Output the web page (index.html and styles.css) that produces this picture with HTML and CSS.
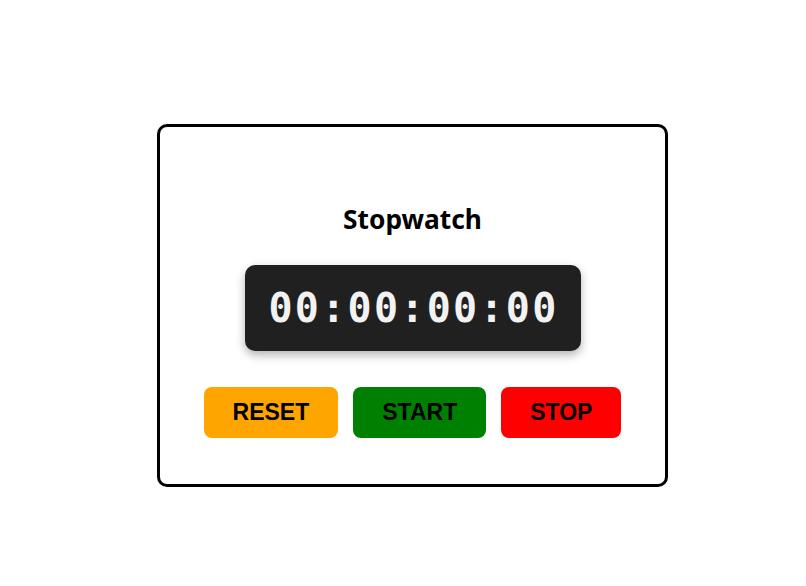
FILE: index.html
```html
<!DOCTYPE html>
<html lang="en">
<head>
<meta charset="utf-8">
<title>Stopwatch</title>
<link rel="stylesheet" href="styles.css">
</head>
<body>
  <main class="card">
    <h1 class="title">Stopwatch</h1>
    <div class="display">00:00:00:00</div>
    <div class="controls">
      <button class="btn btn-reset">RESET</button>
      <button class="btn btn-start">START</button>
      <button class="btn btn-stop">STOP</button>
    </div>
  </main>
</body>
</html>
```

FILE: styles.css
```css
html, body {
  margin: 0;
  padding: 0;
  background: #ffffff;
}

body {
  display: flex;
  justify-content: center;
  align-items: flex-start;
  padding: 124px 0 0 19px;
  font-family: "Noto Sans", "Open Sans", sans-serif;
}

.card {
  box-sizing: border-box;
  width: 511px;
  border: 3px solid #000000;
  border-radius: 10px;
  padding: 76px 0 46px;
  display: flex;
  flex-direction: column;
  align-items: center;
}

.title {
  margin: 0;
  font-size: 26.3px;
  line-height: 32px;
  font-weight: 700;
  color: #000000;
}

.display {
  margin-top: 30px;
  box-sizing: border-box;
  width: 336px;
  height: 86px;
  display: flex;
  align-items: center;
  justify-content: center;
  background: #202020;
  border-radius: 10px;
  box-shadow: 0 4px 10px rgba(0, 0, 0, 0.3);
  color: #f2f2f2;
  font-family: "DejaVu Sans Mono", monospace;
  font-weight: 700;
  font-size: 40px;
  letter-spacing: 2.3px;
  padding-left: 2px;
}

.controls {
  margin-top: 36px;
  display: flex;
  gap: 15px;
}

.btn {
  height: 51px;
  padding: 0 29px;
  border: none;
  border-radius: 8px;
  font-family: "Liberation Sans", Arial, sans-serif;
  font-weight: 700;
  font-size: 23px;
  color: #000000;
  cursor: pointer;
}

.btn-reset { background: #ffa500; }
.btn-start { background: #008000; }
.btn-stop { background: #ff0000; }
```
